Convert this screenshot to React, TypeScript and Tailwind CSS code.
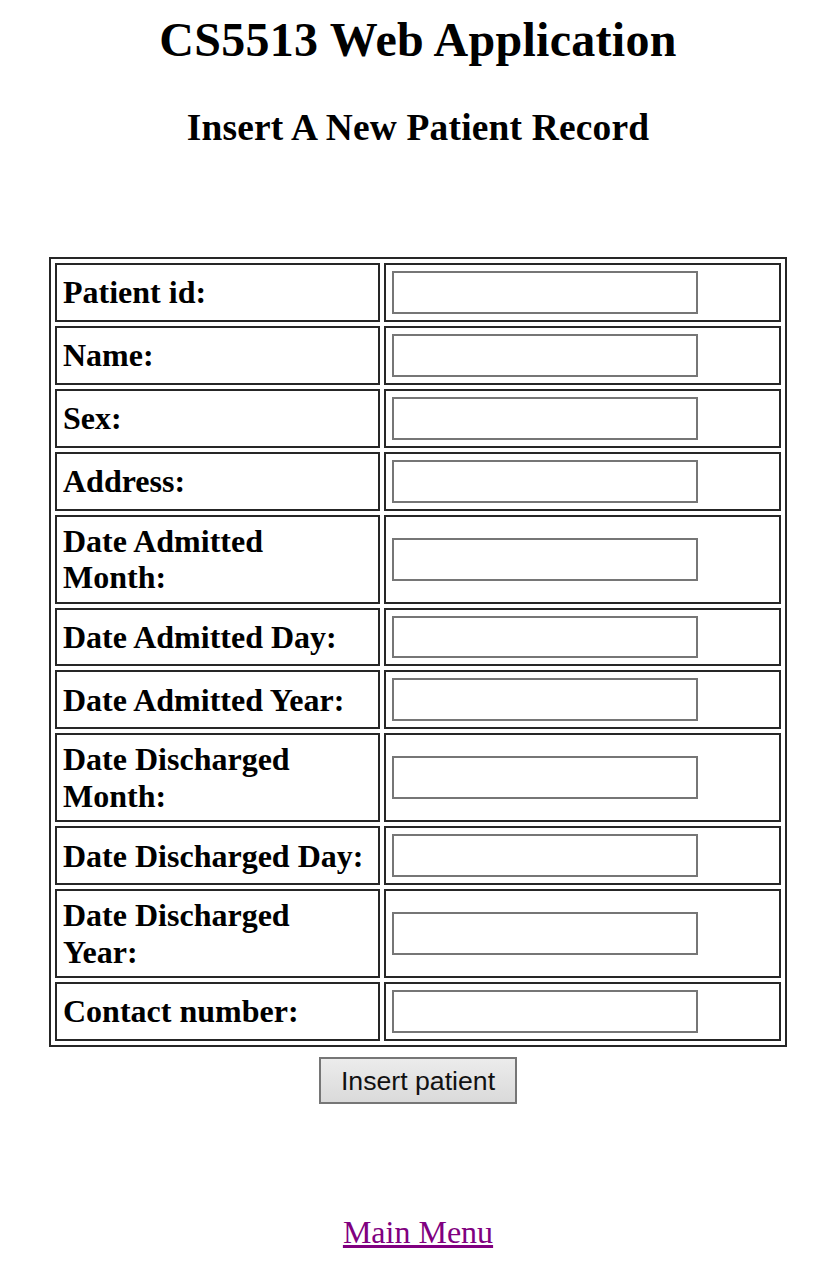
import React from "react";

const rows: { label: React.ReactNode }[] = [
  { label: "Patient id:" },
  { label: "Name:" },
  { label: "Sex:" },
  { label: "Address:" },
  { label: <>Date Admitted<br />Month:</> },
  { label: "Date Admitted Day:" },
  { label: "Date Admitted Year:" },
  { label: <>Date Discharged<br />Month:</> },
  { label: "Date Discharged Day:" },
  { label: <>Date Discharged<br />Year:</> },
  { label: "Contact number:" },
];

const Cell = ({ children }: { children: React.ReactNode }) => {
  return (
    <div className="border-2 border-[#262626] p-[6px] flex items-center">
      {children}
    </div>
  );
};

export default function App() {
  return (
    <div className="pl-[10px] font-['Liberation_Serif',serif] text-black bg-white min-h-[1268px]">
      <div className="flex flex-col items-center">
        <h1 className="mt-[12px] text-[48px] leading-[55px] font-bold tracking-[0.28px]">
          CS5513 Web Application
        </h1>
        <h3 className="mt-[39px] text-[37.44px] leading-[43px] font-bold tracking-[0.2px]">
          Insert A New Patient Record
        </h3>

        <form className="mt-[108px] flex flex-col items-center">
          <div className="w-[738px] border-2 border-[#262626] p-[4px] grid grid-cols-[325px_397px] gap-[4px]">
            {rows.map((row, i) => (
              <React.Fragment key={i}>
                <Cell>
                  <span className="text-[32px] leading-[36.5px] font-bold">
                    {row.label}
                  </span>
                </Cell>
                <Cell>
                  <input
                    type="text"
                    className="w-[306px] h-[42.9px] border-2 border-[#767676] bg-white px-1 text-[26px] outline-none"
                  />
                </Cell>
              </React.Fragment>
            ))}
          </div>

          <button
            type="button"
            className="mt-[10px] w-[198px] h-[47px] border-2 border-[#767676] bg-gradient-to-b from-[#ececec] to-[#dadada] font-['Liberation_Sans',Arial,sans-serif] text-[26.67px] text-[#111]"
          >
            Insert patient
          </button>
        </form>

        <a
          href="#"
          className="mt-[110px] text-[32px] leading-[37px] text-[#800080] underline"
        >
          Main Menu
        </a>
      </div>
    </div>
  );
}
